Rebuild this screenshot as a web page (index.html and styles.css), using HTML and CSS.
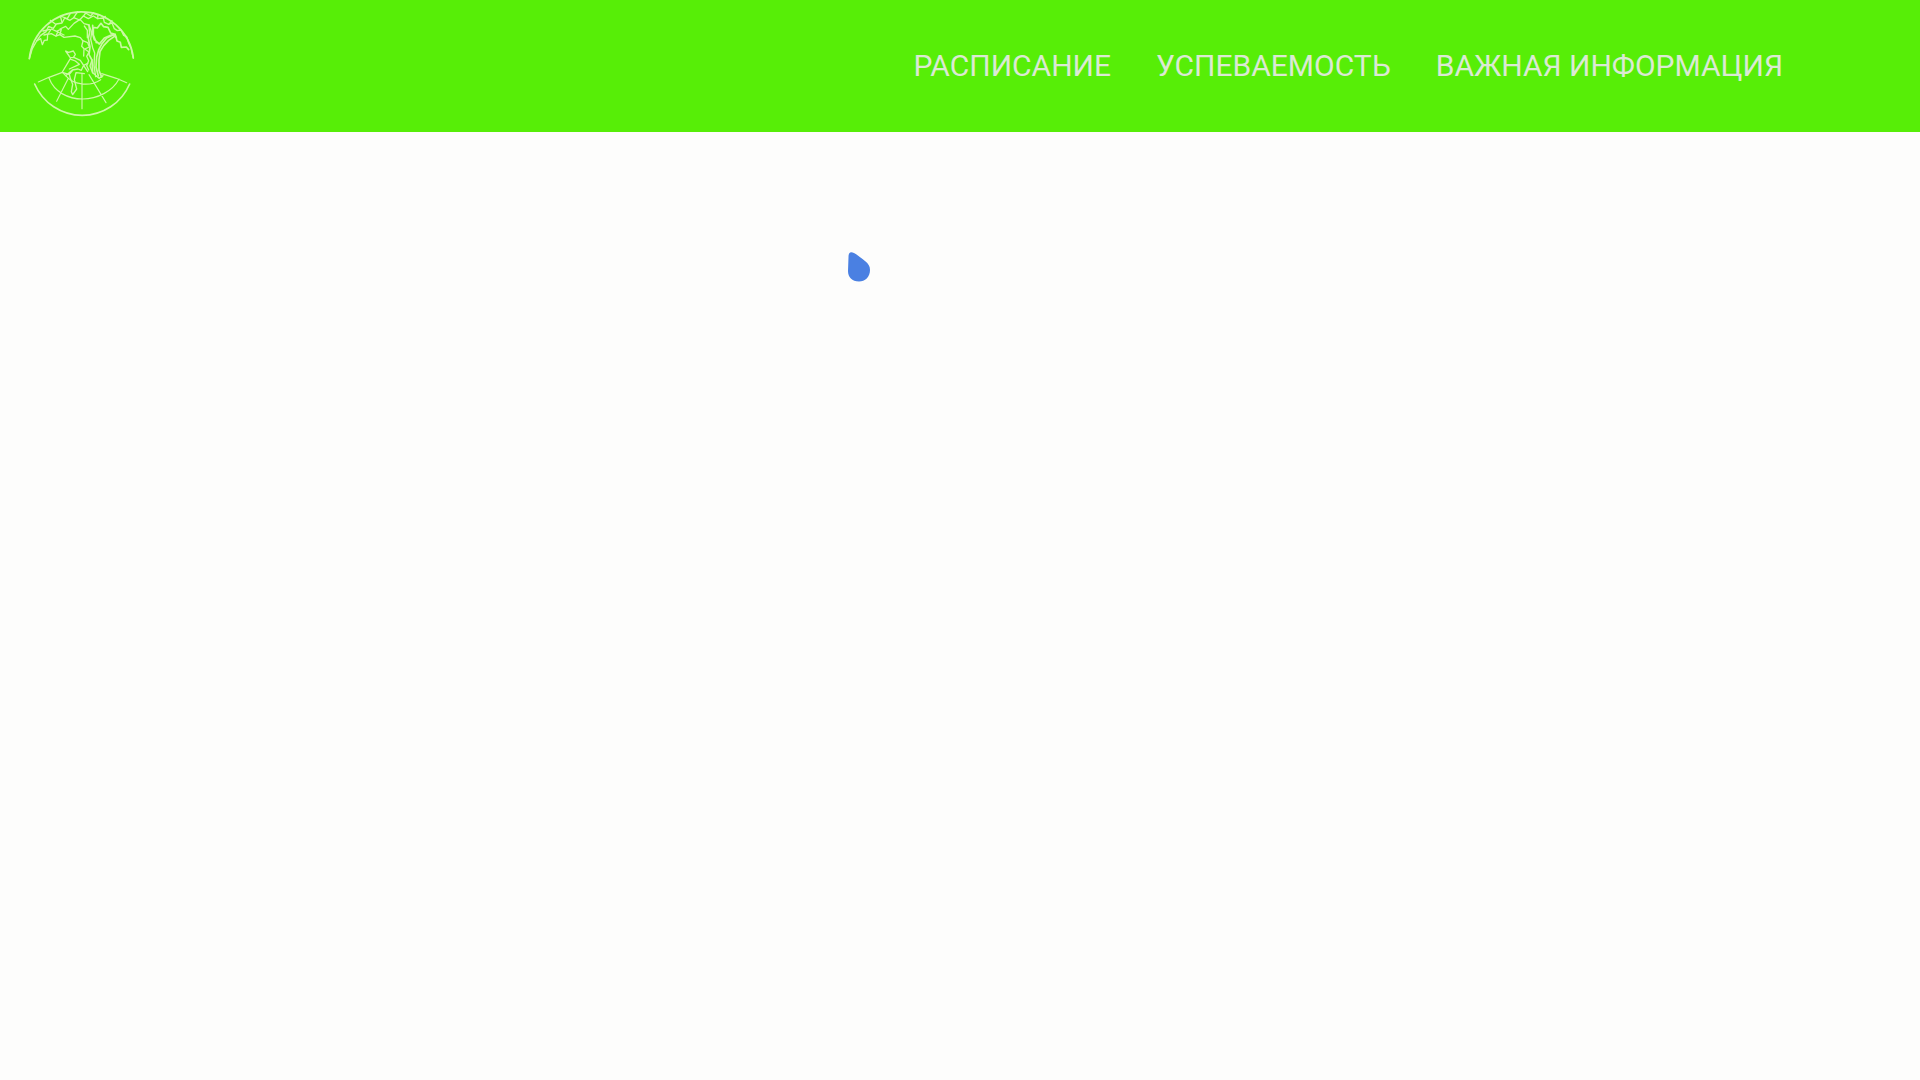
FILE: index.html
```html
<!DOCTYPE html>
<html lang="ru">
<head>
<meta charset="utf-8">
<title>Расписание</title>
<link rel="stylesheet" href="styles.css">
</head>
<body>
<header class="header">
  <a class="logo" aria-label="Главная">
    <svg class="logo-image" viewBox="24 24 324 330" fill="none" stroke="#cbf9a4" stroke-width="4" stroke-linecap="round" stroke-linejoin="round">
      <path d="M28 176A157 157 0 0 1 340 174" stroke-width="5"/>
      <path d="M44 252A155 155 0 0 0 329 252" stroke-width="5"/>
      <path d="M28 176L37 146L50 123L62 116L67 134L73 121L82 120L83 103L94 101L107 108L120 104L132 112L165 108L181 113L189 123L185 139L192 146L191 168"/>
      <path d="M50 123L61 107L78 95L86 79L100 85L109 72L126 69L134 54L150 61L161 53L179 60L190 48L205 56L220 48L233 56L250 54L253 67L266 73L276 69L283 86L292 92L303 90L311 106L320 110L326 129L333 144L340 174"/>
      <path d="M72 105L84 102L94 87L110 94L124 87L120 104M120 87L137 79L145 88L162 70L180 58L192 71L207 75M69 93L89 88M107 73L91 61M126 67L121 48L142 56L151 40M161 53L173 35M190 49L197 39L212 48L221 38M233 56L234 43M250 54L256 49M266 73L276 62M108 108L113 96L132 105"/>
      <path d="M207 75L209 98L205 115L210 141L207 164L216 180L218 218M218 76L218 102L223 119L238 132L253 114L279 103L289 113M229 128L220 105L220 82L232 84L243 70L251 80L264 82L272 99L286 103" stroke-width="5"/>
      <path d="M279 105L260 114L246 131L236 150L230 171L228 201L235 228M287 107L266 121L251 137L240 155L237 180L237 211L245 231M287 107L291 123L301 127L304 142L319 141L326 149" stroke-width="5"/>
      <path d="M207 76L215 97L212 117L218 143L224 159L222 196L227 230M193 78L202 91L202 113M188 122L203 128L208 141L194 147L207 156L200 169M200 169L206 182L200 197L206 210M216 180L210 198L218 218L237 235L249 227"/>
      <path d="M150 172L137 153L146 157L160 153L166 163L160 173Z"/>
      <path d="M151 176L127 216L137 227L157 210L174 207L184 211L191 196L203 190M163 173L181 181L203 215M153 178L166 183L178 193L148 207M158 211L148 223L151 235L158 253L154 275L158 284L170 267L163 239L168 218L193 221"/>
      <path d="M55 246L87 232L127 217L147 223M87 234C103 277 145 297 188 297C231 297 278 274 297 237M320 248L289 235L245 221M137 227C159 254 208 262 242 239M186 220V326M145 235L110 304M207 224L258 308" stroke-width="3.500"/>
    </svg>
  </a>
  <nav class="nav">
    <a>РАСПИСАНИЕ</a>
    <a>УСПЕВАЕМОСТЬ</a>
    <a>ВАЖНАЯ ИНФОРМАЦИЯ</a>
  </nav>
</header>
<main class="content">
  <svg class="loader" viewBox="0 0 24 32"><path d="M1.500 6C1.500 2 3 0 7 2C10 3.500 14 7 18 10C21.500 13 23 15 23 19C23 26 18 30.500 12 30.500C5 30.500 1 26 1 20Z" fill="#4a80e2"/></svg>
</main>
</body>
</html>
```
FILE: styles.css
```css
body {
  margin: 0;
  background: #fdfdfc;
  font-family: Roboto, sans-serif;
}

.header {
  display: flex;
  justify-content: space-between;
  box-sizing: border-box;
  height: 132px;
  padding: 8px 137px 0 28px;
  background: #57ee07;
}

.logo-image {
  display: block;
  width: 108px;
  height: 110px;
}

.nav {
  display: flex;
  gap: 45px;
  padding-top: 40px;
  color: #dbe9d3;
  font-size: 30px;
  line-height: 36px;
  white-space: nowrap;
}

.content {
  display: flex;
  justify-content: center;
  padding: 119px 202px 0 0;
}

.loader {
  width: 24px;
  height: 32px;
}
```
